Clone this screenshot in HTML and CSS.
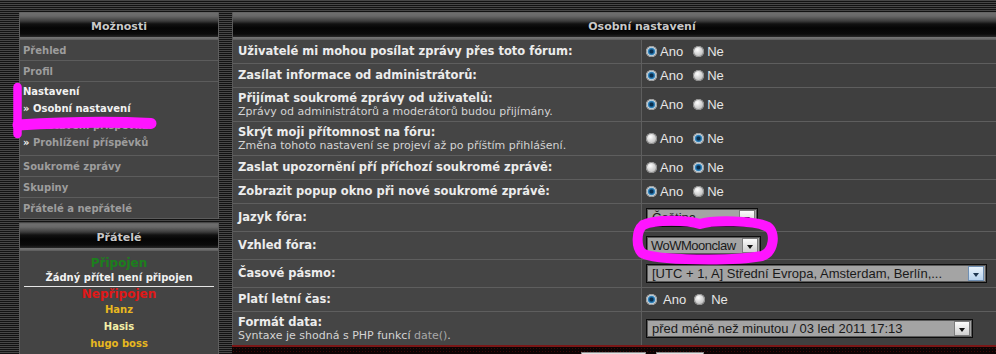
FILE: index.html
```html
<!DOCTYPE html>
<html lang="cs">
<head>
<meta charset="utf-8">
<title>Osobní nastavení</title>
<link rel="stylesheet" href="styles.css">
</head>
<body>
<div class="viewport">
<div class="page">
  <aside class="sidebar">
    <section class="panel menu">
      <h2 class="panel-head">Možnosti</h2>
      <ul class="menu-list">
        <li class="menu-item">Přehled</li>
        <li class="menu-item">Profil</li>
        <li class="menu-group">
          <span class="group-title">Nastavení</span>
          <span class="sub current">» Osobní nastavení</span>
          <span class="sub"><b class="raquo">»</b> Nastavení příspěvků</span>
          <span class="sub"><b class="raquo">»</b> Prohlížení příspěvků</span>
        </li>
        <li class="menu-item">Soukromé zprávy</li>
        <li class="menu-item">Skupiny</li>
        <li class="menu-item">Přátelé a nepřátelé</li>
      </ul>
    </section>
    <section class="panel friends">
      <h2 class="panel-head">Přátelé</h2>
      <div class="friends-body">
        <div class="status online">Připojen</div>
        <div class="none">Žádný přítel není připojen</div>
        <hr class="divider">
        <div class="status offline">Nepřipojen</div>
        <div class="friend gold">Hanz</div>
        <div class="friend pale">Hasis</div>
        <div class="friend gold">hugo boss</div>
      </div>
    </section>
  </aside>

  <main class="content">
    <section class="panel settings">
      <h2 class="panel-head">Osobní nastavení</h2>
      <div class="row">
        <div class="label"><strong>Uživatelé mi mohou posílat zprávy přes toto fórum:</strong></div>
        <div class="value"><span class="radio on"></span><span class="opt">Ano</span><span class="radio"></span><span class="opt">Ne</span></div>
      </div>
      <div class="row">
        <div class="label"><strong>Zasílat informace od administrátorů:</strong></div>
        <div class="value"><span class="radio on"></span><span class="opt">Ano</span><span class="radio"></span><span class="opt">Ne</span></div>
      </div>
      <div class="row tall">
        <div class="label"><strong>Přijímat soukromé zprávy od uživatelů:</strong><span class="hint">Zprávy od administrátorů a moderátorů budou přijímány.</span></div>
        <div class="value"><span class="radio on"></span><span class="opt">Ano</span><span class="radio"></span><span class="opt">Ne</span></div>
      </div>
      <div class="row tall">
        <div class="label"><strong>Skrýt moji přítomnost na fóru:</strong><span class="hint">Změna tohoto nastavení se projeví až po příštím přihlášení.</span></div>
        <div class="value"><span class="radio"></span><span class="opt">Ano</span><span class="radio on"></span><span class="opt">Ne</span></div>
      </div>
      <div class="row">
        <div class="label"><strong>Zaslat upozornění pří příchozí soukromé zprávě:</strong></div>
        <div class="value"><span class="radio"></span><span class="opt">Ano</span><span class="radio on"></span><span class="opt">Ne</span></div>
      </div>
      <div class="row">
        <div class="label"><strong>Zobrazit popup okno při nové soukromé zprávě:</strong></div>
        <div class="value"><span class="radio on"></span><span class="opt">Ano</span><span class="radio"></span><span class="opt">Ne</span></div>
      </div>
      <div class="row sel">
        <div class="label"><strong>Jazyk fóra:</strong></div>
        <div class="value"><span class="select w-lang"><span class="sel-text">Čeština</span><span class="sel-btn"></span></span></div>
      </div>
      <div class="row sel">
        <div class="label"><strong>Vzhled fóra:</strong></div>
        <div class="value"><span class="select w-style"><span class="sel-text">WoWMoonclaw</span><span class="sel-btn"></span></span></div>
      </div>
      <div class="row sel">
        <div class="label"><strong>Časové pásmo:</strong></div>
        <div class="value"><span class="select w-tz"><span class="sel-text">[UTC + 1, A] Střední Evropa, Amsterdam, Berlín,...</span><span class="sel-btn hot"></span></span></div>
      </div>
      <div class="row">
        <div class="label"><strong>Platí letní čas:</strong></div>
        <div class="value wide"><span class="radio on"></span><span class="opt">Ano</span><span class="radio"></span><span class="opt">Ne</span></div>
      </div>
      <div class="row tall last">
        <div class="label"><strong>Formát data:</strong><span class="hint">Syntaxe je shodná s PHP funkcí <span class="code">date()</span>.</span></div>
        <div class="value"><span class="select w-date"><span class="sel-text">před méně než minutou / 03 led 2011 17:13</span><span class="sel-btn"></span></span></div>
      </div>
    </section>
    <div class="footer-bar">
      <span class="btn b1"></span>
      <span class="btn b2"></span>
    </div>
  </main>
</div>

<svg class="scribble" width="996" height="354" viewBox="0 0 996 354" aria-hidden="true">
  <path d="M17.5,87 L17.5,134" />
  <path class="band" d="M18,125 C60,122.5 110,121.5 151,123.5" />
  <path class="loop" d="M700,224 C688,220 655,219 643,225 C636,231 636,247 642,253 C655,261 735,261 762,256 C774,252 776,233 768,227 C755,220 712,220 700,224 Z" />
</svg>
</div>
</body>
</html>
```

FILE: styles.css
```css
* { box-sizing: border-box; margin: 0; padding: 0; }

html, body {
  width: 996px;
  height: 354px;
  overflow: hidden;
}

body {
  background: #121212;
  font-family: "DejaVu Sans", Verdana, sans-serif;
  color: #e8e8e8;
}

.viewport {
  position: relative;
  width: 996px;
  height: 354px;
  overflow: hidden;
  background: repeating-linear-gradient(to bottom, #474747 0 1px, #121212 1px 2px);
}

.page {
  display: flex;
  gap: 13px;
  padding: 12px 0 0 19px;
  width: 1100px;
}

.sidebar {
  width: 200px;
  flex: none;
  display: flex;
  flex-direction: column;
  gap: 4px;
}

.content {
  width: 820px;
  flex: none;
}

.panel {
  background: #444;
  border-left: 1px solid #5e5e5e;
  border-right: 1px solid #5e5e5e;
}

.panel-head {
  height: 28px;
  display: flex;
  align-items: center;
  justify-content: center;
  font-size: 11px;
  font-weight: bold;
  color: #c9c9c9;
  text-shadow: 0 1px 1px #000;
  background: linear-gradient(to bottom,
    #5c5c5c 0, #6e6e6e 1px, #686868 4px, #3c3c3c 9px, #111 12px,
    #050505 16px, #0b0b0b 22px, #1e1e1e 24px, #2a2a2a 25px,
    #777 25px, #6a6a6a 27px, #585858 28px);
}

/* left menu */
.menu-list { list-style: none; }

.menu-item {
  height: 21px;
  display: flex;
  align-items: center;
  padding-left: 3px;
  border-bottom: 1px solid #5c5c5c;
  font-size: 10px;
  font-weight: bold;
  color: #9d9d9d;
}

.menu-group {
  display: flex;
  flex-direction: column;
  padding: 1px 0 4px 3px;
  height: 74px;
  border-bottom: 1px solid #5c5c5c;
  font-size: 10px;
  font-weight: bold;
}

.group-title, .sub {
  line-height: 17px;
  height: 17px;
}

.group-title { color: #f2f2f2; }
.sub { color: #9d9d9d; }
.sub.current { color: #f2f2f2; }
.raquo { color: #f2f2f2; }

/* friends */
.friends {
  height: 140px;
}

.friends-body {
  padding: 4px 4px 0;
  text-align: center;
  font-weight: bold;
}

.status { font-size: 12px; }
.online { line-height: 16px; color: #1c7f1c; }
.offline { line-height: 14px; color: #e01818; }

.none {
  font-size: 10px;
  line-height: 13px;
  color: #f2f2f2;
}

.divider {
  border: 0;
  border-top: 1px solid #e6e6e6;
  margin: 2px 0 0;
}

.friend {
  font-size: 10px;
  line-height: 17px;
}
.gold { color: #e8b81f; }
.pale { color: #f4f0a8; }

/* settings table */
.settings { border-left-color: #5a5a5a; }

.row {
  display: grid;
  grid-template-columns: 409px 1fr;
  min-height: 24px;
  border-bottom: 1px solid #5e5e5e;
}

.row.tall { min-height: 34px; }
.row.sel { min-height: 28px; }
.row.last { min-height: 33px; border-bottom: 0; }

.label {
  display: flex;
  flex-direction: column;
  justify-content: center;
  padding: 0 5px;
  border-right: 1px solid #5e5e5e;
  background: #454545;
}

.label strong {
  font-size: 11.5px;
  line-height: 13px;
  color: #ececec;
}

.hint {
  font-size: 11px;
  line-height: 13px;
  color: #d4d4d4;
}

.code { color: #a8a8a8; }

.value {
  display: flex;
  align-items: center;
  padding-left: 4px;
  background: #3f3f3f;
  font-family: "Liberation Sans", Arial, sans-serif;
  font-size: 13px;
  color: #e6e6e6;
}

.radio {
  width: 11px;
  height: 11px;
  flex: none;
  border-radius: 50%;
  background: radial-gradient(circle at 40% 35%, #fff 0, #dcdcdc 35%, #a4a4a4 100%);
  box-shadow: inset 0 0 0 1px #8d8d8d;
}

.radio.on {
  background: radial-gradient(circle at 50% 50%, #0b2e4c 0 1.4px, #1b679d 2.4px, #3d8cc4 3.4px, #cfe0ea 4.2px, #f0f0f0 5.5px);
  box-shadow: inset 0 0 0 1px #9a9a9a;
}

.opt { margin: 0 10px 0 3px; }
.value.wide .opt { margin: 0 8px 0 6px; }

/* selects */
.select {
  display: flex;
  align-items: center;
  height: 19px;
  background: #a4a4a4;
  border: 1px solid #0c0c0c;
  box-shadow: inset 0 0 0 1px #5a5a5a;
  font-size: 13px;
  color: #1a1a1a;
}

.sel-text {
  flex: 1;
  padding-left: 5px;
  white-space: nowrap;
  overflow: hidden;
}

.w-style .sel-text {
  padding-left: 4px;
  letter-spacing: -0.5px;
}

.sel-btn {
  position: relative;
  width: 16px;
  height: 15px;
  margin-right: 2px;
  flex: none;
  background: linear-gradient(to bottom, #fbfbfb, #d0d0d0);
  border: 1px solid #7c7c7c;
}

.sel-btn::after {
  content: "";
  position: absolute;
  left: 4px;
  top: 6px;
  border-left: 3.5px solid transparent;
  border-right: 3.5px solid transparent;
  border-top: 4px solid #111;
}

.sel-btn.hot {
  background: linear-gradient(to bottom, #e8f2fb, #b9d3ee);
  border-color: #6f8fb3;
}
.sel-btn.hot::after { border-top-color: #1e3550; }

.w-lang { width: 112px; }
.w-style { width: 115px; }
.w-tz { width: 341px; }
.w-date { width: 327px; }

/* footer under the table */
.footer-bar {
  height: 30px;
  display: flex;
  justify-content: center;
  gap: 10px;
  padding-top: 5px;
  border-top: 2px solid #7a1616;
  background:
    radial-gradient(circle, #3a0808 0 0.8px, transparent 1px) 0 0 / 3px 3px,
    #0c0303;
}

.btn {
  height: 20px;
  background: linear-gradient(to bottom, #e2e2e2, #bcbcbc);
  border: 1px solid #8a8a8a;
}
.b1 { width: 65px; }
.b2 { width: 48px; }

/* pink marker annotation drawn over the screenshot */
.scribble {
  position: absolute;
  left: 0;
  top: 0;
  pointer-events: none;
}

.scribble path {
  fill: none;
  stroke: #ff14ff;
  stroke-width: 8.5;
  stroke-linecap: round;
  stroke-linejoin: round;
}

.scribble path.band { stroke-width: 11; }
.scribble path.loop { stroke-width: 10; }
```
